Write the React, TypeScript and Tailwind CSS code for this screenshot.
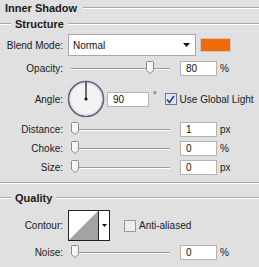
const font = { fontFamily: '"Liberation Sans", Arial, sans-serif' };

function Groove({ className = '' }: { className?: string }) {
  return <div className={`h-[2px] border-t border-[#a9a9a9] border-b border-b-white ${className}`} />;
}

function Thumb() {
  return (
    <svg width="8" height="13" viewBox="0 0 8 13" className="block">
      <path d="M1.5 0.5 H6.5 Q7.5 0.5 7.5 1.5 V9.5 L4 12.5 L0.5 9.5 V1.5 Q0.5 0.5 1.5 0.5 Z" fill="#f4f4f4" stroke="#8a8a8a" />
      <path d="M2 2 V9" stroke="#ffffff" />
    </svg>
  );
}

function Slider({ pos }: { pos: number }) {
  return (
    <div className="relative ml-[8px] h-full w-[99px]">
      <div className="absolute left-0 right-0 top-1/2 h-[2px] border-t border-[#9a9a9a] border-b border-b-white" />
      <div className="absolute top-[2px]" style={{ left: pos }}>
        <Thumb />
      </div>
    </div>
  );
}

function Input({ value, w = 37 }: { value: string; w?: number }) {
  return (
    <div
      className="flex h-[15px] items-center border border-[#b4b4b4] bg-white pl-[5px] text-[10px] text-[#111]"
      style={{ width: w }}
    >
      {value}
    </div>
  );
}

function Label({ children }: { children: React.ReactNode }) {
  return <div className="w-[63px] shrink-0 text-right text-[10px] text-[#1a1a1a]">{children}</div>;
}

function SliderRow({ label, pos, value, unit }: { label: string; pos: number; value: string; unit: string }) {
  return (
    <div className="flex h-[18px] items-center">
      <Label>{label}</Label>
      <Slider pos={pos} />
      <div className="ml-[10px]">
        <Input value={value} />
      </div>
      <div className="ml-[3px] text-[10px] text-[#1a1a1a]">{unit}</div>
    </div>
  );
}

export default function App() {
  return (
    <div className="h-[267px] w-[259px] overflow-hidden bg-[#e0e0e0] text-[#111]" style={font}>
      {/* Inner Shadow header */}
      <div className="flex h-4 items-center">
        <div className="pl-[5px] text-[11px] font-bold text-[#1a1a1a]">Inner Shadow</div>
        <Groove className="ml-[6px] flex-1" />
      </div>

      {/* Structure */}
      <div className="flex h-4 items-center">
        <Groove className="w-[11px]" />
        <div className="px-[4px] text-[11px] font-bold text-[#1a1a1a]">Structure</div>
        <Groove className="flex-1" />
      </div>

      {/* Blend mode */}
      <div className="mt-[2px] flex h-[22px] items-center">
        <Label>Blend Mode:</Label>
        <div className="ml-[5px] flex h-[22px] w-[128px] items-center justify-between border border-[#a7a7a7] bg-white pl-[4px] pr-[5px] text-[10px]">
          <span>Normal</span>
          <svg width="7" height="4" viewBox="0 0 7 4">
            <path d="M0 0 H7 L3.5 4 Z" fill="#111" />
          </svg>
        </div>
        <div className="ml-[4px] h-[14px] w-[31px] border border-[#c8c8c8] bg-[#f06a08]" />
      </div>

      {/* Opacity */}
      <div className="mt-[3px]">
        <SliderRow label="Opacity:" pos={75} value="80" unit="%" />
      </div>

      {/* Angle */}
      <div className="mt-[3px] flex h-[38px] items-center">
        <Label>Angle:</Label>
        <svg width="38" height="38" viewBox="0 0 38 38" className="ml-[4px] shrink-0">
          <circle cx="19" cy="19" r="17.5" fill="#f3f3f5" stroke="#5d6383" strokeWidth="1.6" />
          <circle cx="19" cy="19" r="16" fill="none" stroke="#d6d6de" strokeWidth="1" />
          <line x1="19" y1="19" x2="19" y2="1.5" stroke="#111" strokeWidth="1.2" />
          <circle cx="19" cy="19" r="1.6" fill="#111" />
        </svg>
        <div className="ml-[2px]">
          <Input value="90" w={42} />
        </div>
        <div className="ml-[4px] -mt-[6px] text-[9px]">°</div>
        <div className="ml-[8px] flex h-[12px] w-[12px] items-center justify-center border border-[#6a7894] bg-[#dfe5f3]">
          <svg width="9" height="9" viewBox="0 0 9 9">
            <path d="M1 4.5 L3.5 7.5 L8 1" fill="none" stroke="#2a3a8a" strokeWidth="1.6" />
          </svg>
        </div>
        <div className="ml-[3px] text-[10px] text-[#1a1a1a]">Use Global Light</div>
      </div>

      {/* Distance / Choke / Size */}
      <div className="mt-[2px]">
        <SliderRow label="Distance:" pos={0} value="1" unit="px" />
      </div>
      <div className="mt-[1px]">
        <SliderRow label="Choke:" pos={0} value="0" unit="%" />
      </div>
      <div className="mt-[1px]">
        <SliderRow label="Size:" pos={0} value="0" unit="px" />
      </div>

      <Groove className="mt-[6px]" />

      {/* Quality */}
      <div className="mt-[6px] flex h-4 items-center">
        <Groove className="w-[11px]" />
        <div className="px-[4px] text-[11px] font-bold text-[#1a1a1a]">Quality</div>
        <Groove className="flex-1" />
      </div>

      {/* Contour */}
      <div className="mt-[4px] flex h-[31px] items-center">
        <Label>Contour:</Label>
        <div className="ml-[5px] flex h-[31px] w-[42px] border border-[#222] bg-white">
          <svg width="29" height="29" viewBox="0 0 29 29" className="block">
            <path d="M0 29 L29 0 V29 Z" fill="#a3a3a3" />
          </svg>
          <div className="flex flex-1 items-center justify-center border-l border-[#222]">
            <svg width="5" height="3" viewBox="0 0 5 3">
              <path d="M0 0 H5 L2.5 3 Z" fill="#111" />
            </svg>
          </div>
        </div>
        <div className="ml-[14px] h-[12px] w-[12px] border border-[#9a9a9a] bg-[#ececec]" />
        <div className="ml-[3px] text-[10px] text-[#1a1a1a]">Anti-aliased</div>
      </div>

      {/* Noise */}
      <div className="mt-[2px]">
        <SliderRow label="Noise:" pos={0} value="0" unit="%" />
      </div>
    </div>
  );
}
